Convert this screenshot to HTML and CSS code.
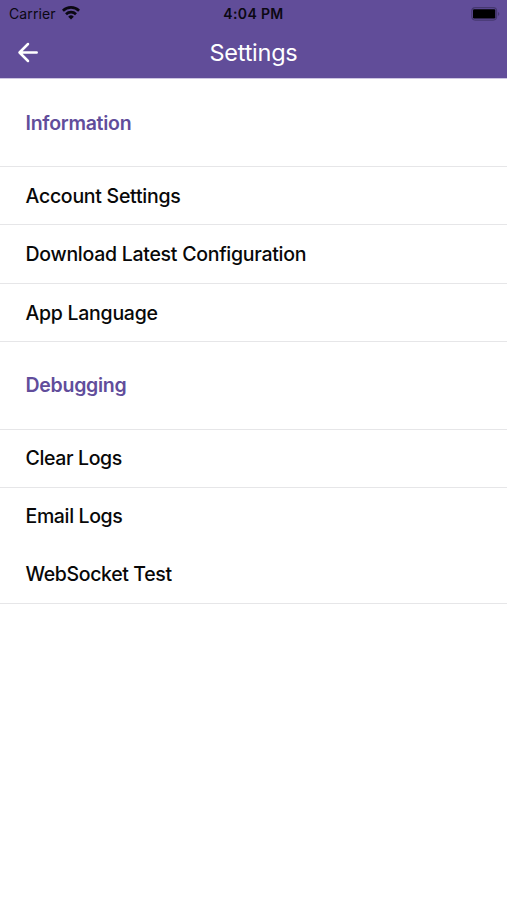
FILE: index.html
```html
<!DOCTYPE html>
<html lang="en">
<head>
<meta charset="utf-8">
<title>Settings</title>
<link rel="stylesheet" href="styles.css">
</head>
<body>
<header class="header">
  <div class="status">
    <div class="carrier"><span class="carrier-name">Carrier</span>
      <svg class="wifi" viewBox="0 0 18 14" width="18" height="14"><g fill="none" stroke="#0b0812" stroke-width="2.7"><path d="M.9 4.7a11.600 11.600 0 0 1 16.200 0"/><path d="M4 8.200a7.200 7.200 0 0 1 10 0"/></g><path d="M6.200 10.700a4 4 0 0 1 5.600 0L9 13.600z" fill="#0b0812"/></svg>
    </div>
    <span class="time">4:04 PM</span>
    <svg class="battery" viewBox="0 0 29 14" width="29" height="14"><rect x=".8" y=".7" width="24.800" height="12.400" rx="3.500" fill="none" stroke="#463870" stroke-width="1.200"/><rect x="2" y="2.200" width="22.300" height="9.200" rx="1.200" fill="#000"/><path d="M27 5q1.300.6 1.300 1.900T27 8.800z" fill="#463870"/></svg>
  </div>
  <div class="bar">
    <svg class="back" viewBox="0 0 22 22" width="22" height="22"><path d="M19.700 10.500H3M11 2L2.500 10.500 11 19" fill="none" stroke="#fff" stroke-width="2.500" stroke-linecap="round" stroke-linejoin="round"/></svg>
    <h1 class="title">Settings</h1>
  </div>
</header>
<main>
  <section class="group upper">
    <h2 class="section">Information</h2>
    <div class="row">Account Settings</div>
    <div class="row">Download Latest Configuration</div>
    <div class="row">App Language</div>
  </section>
  <section class="group lower">
    <h2 class="section">Debugging</h2>
    <div class="row">Clear Logs</div>
    <div class="row plain">Email Logs</div>
    <div class="row">WebSocket Test</div>
  </section>
</main>
</body>
</html>
```
FILE: styles.css
```css
* { box-sizing: border-box; }
body { margin: 0; background: #fff; color: #080808; font-family: Inter, sans-serif; }
.header { height: 79px; background: #614d99; border-bottom: 1px solid #cdc5e2; }
.status { height: 27px; display: grid; grid-template-columns: 1fr auto 1fr; align-items: center; padding: 0 7px 0 9px; font-size: 14px; color: #0b0812; }
.carrier { display: flex; align-items: center; gap: 6px; }
.carrier-name { letter-spacing: .12px; }
.wifi { margin-top: -1px; }
.time { font-weight: 600; letter-spacing: .35px; margin-left: -2px; }
.battery { justify-self: end; }
.bar { height: 52px; display: grid; grid-template-columns: 40px 1fr 40px; align-items: center; padding: 0 17px; }
.title { margin: -2px 0 0; text-align: center; color: #fff; font-size: 23.5px; font-weight: 400; letter-spacing: -.25px; }
.section, .row { margin: 0; display: flex; align-items: center; padding-left: 25.5px; font-size: 19.5px; letter-spacing: -.27px; white-space: nowrap; border-bottom: 1px solid #e6e6e8; }
.upper .section, .upper .row { padding-top: 1px; }
.section { height: 88px; color: #614d9b; font-weight: 600; }
.row { height: 58.25px; font-weight: 500; }
.lower .row { height: 58px; letter-spacing: -.36px; }
.plain { border-bottom-color: transparent; }
```
